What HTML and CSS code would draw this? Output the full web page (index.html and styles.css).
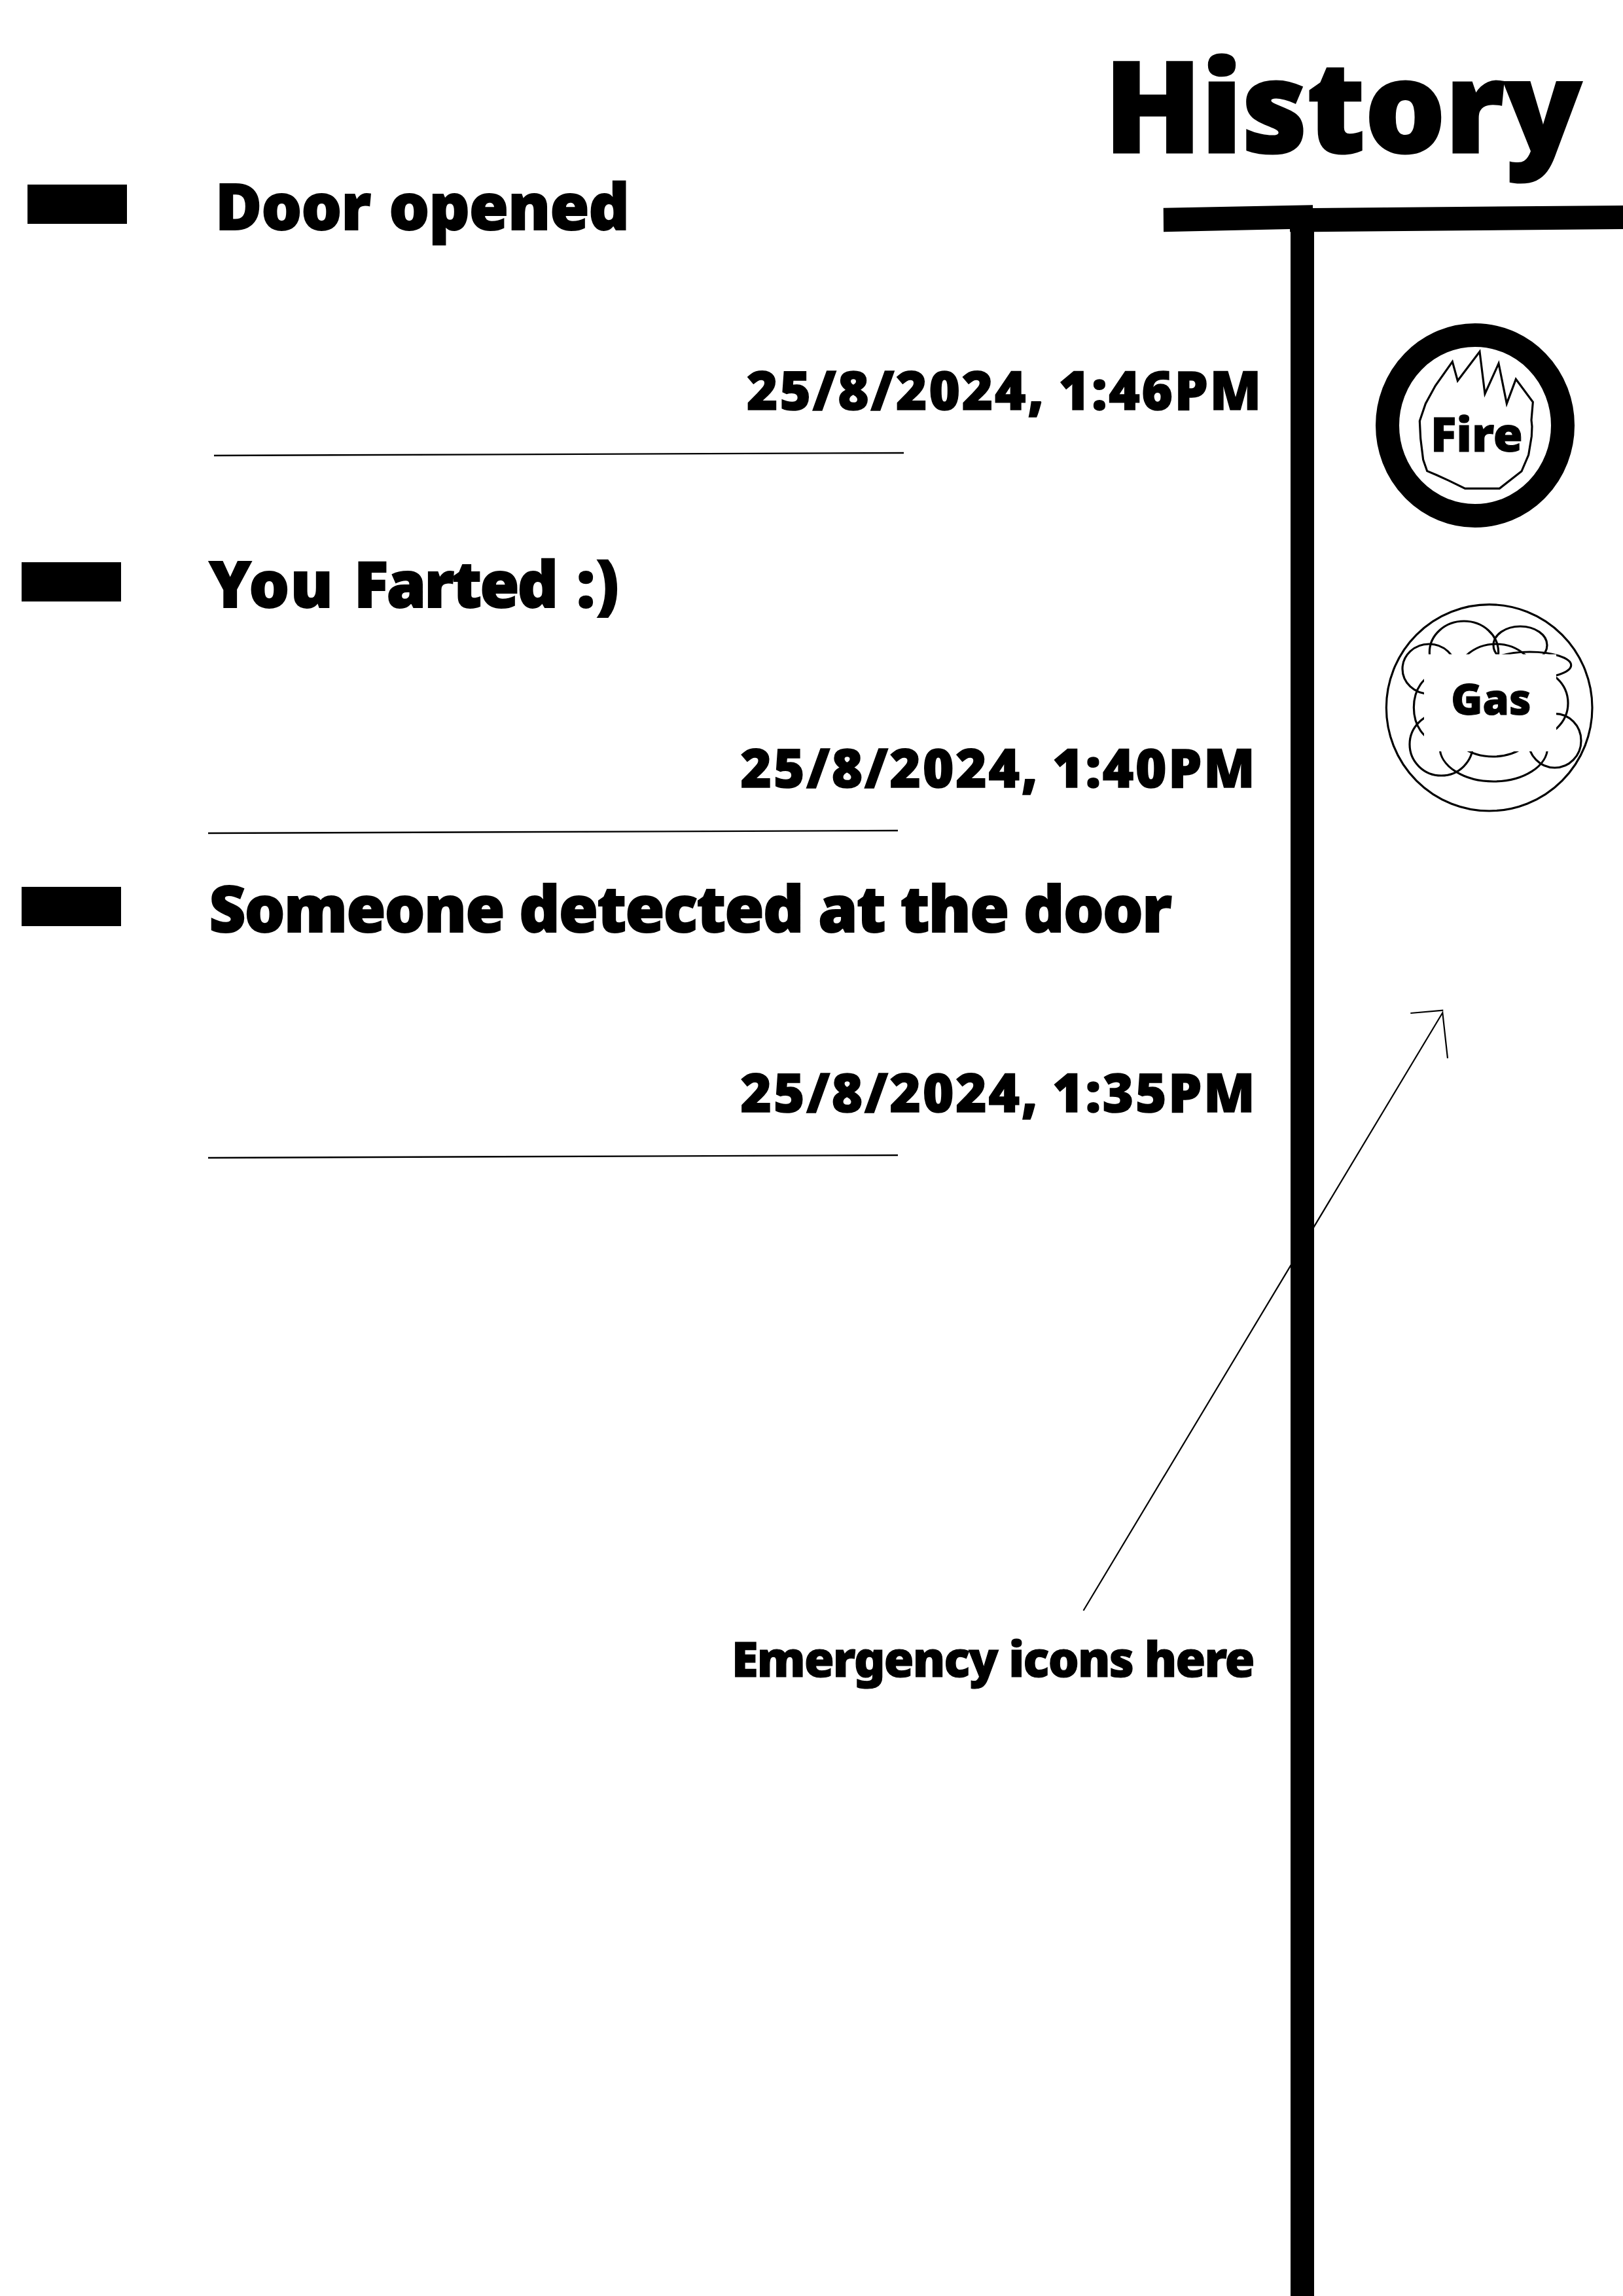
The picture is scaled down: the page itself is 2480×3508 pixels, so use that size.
FILE: index.html
```
<!DOCTYPE html>
<html lang="en">
<head>
<meta charset="utf-8">
<title>History</title>
<link rel="stylesheet" href="styles.css">
</head>
<body>
<header class="header"><h1 class="title">History</h1></header>
<div class="content">
  <main class="log">
    <article class="entry entry-first">
      <div class="marker"></div>
      <h2 class="event event-door">Door opened</h2>
      <time class="stamp">25/8/2024, 1:46PM</time>
      <svg class="rule" viewBox="0 0 1054 10"><line x1="0" y1="6" x2="1054" y2="2"/></svg>
    </article>
    <article class="entry">
      <div class="marker"></div>
      <h2 class="event event-gas">You <span class="tight">Farted</span> :)</h2>
      <time class="stamp">25/8/2024, 1:40PM</time>
      <svg class="rule" viewBox="0 0 1054 10"><line x1="0" y1="6" x2="1054" y2="2"/></svg>
    </article>
    <article class="entry">
      <div class="marker"></div>
      <h2 class="event event-person">Someone detected at the door</h2>
      <time class="stamp">25/8/2024, 1:35PM</time>
      <svg class="rule" viewBox="0 0 1054 10"><line x1="0" y1="6" x2="1054" y2="2"/></svg>
    </article>
    <p class="note">Emergency icons here</p>
  </main>
  <aside class="rail">
    <svg class="alert alert-fire" viewBox="0 0 1080 1080">
      <ellipse class="ring" cx="522" cy="540" rx="402" ry="414"/>
      <polygon class="thin" points="418,248 442,335 543,202 567,395 630,256 667,440 709,328 787,433 780,516 783,545 781,590 767,675 735,750 634,829 476,829 402,793 347,768 302,749 284,697 272,600 268,520 295,440 340,358"/>
      <text class="alert-text" x="318" y="661" font-size="219">Fire</text>
    </svg>
    <svg class="alert alert-gas" viewBox="0 0 1110 1080">
      <g class="thin">
        <ellipse cx="557" cy="544" rx="472" ry="473"/>
        <ellipse cx="441" cy="290" rx="158" ry="143"/>
        <ellipse cx="699" cy="257" rx="123" ry="86"/>
        <ellipse cx="281" cy="366" rx="122" ry="114"/>
        <ellipse cx="588" cy="425" rx="190" ry="173"/>
        <ellipse cx="316" cy="543" rx="105" ry="150"/>
        <ellipse cx="748" cy="523" rx="170" ry="160"/>
        <ellipse cx="574" cy="620" rx="200" ry="148"/>
        <ellipse cx="337" cy="712" rx="145" ry="143"/>
        <ellipse cx="577" cy="725" rx="247" ry="157"/>
        <ellipse cx="857" cy="695" rx="121" ry="124"/>
        <ellipse cx="742" cy="349" rx="190" ry="61"/>
      </g>
      <rect class="plate" x="258" y="299" width="606" height="445"/>
      <text class="alert-text" x="382" y="577" font-size="195">Gas</text>
    </svg>
  </aside>
</div>
<svg class="crossbar" viewBox="0 0 703 44">
  <path d="M0.7 4.8 229 0.3V4.9L703 1V37L230 41.3H194V37L1 41.3Z"/>
</svg>
<svg class="pointer" viewBox="0 0 570 930">
  <path d="M5.5 920.7 554.3 7.3 562 76.8M505.3 8 555.3 3.7"/>
</svg>
</body>
</html>
```
FILE: styles.css
```
body {
  position: relative;
  width: 2480px;
  height: 3508px;
  margin: 0;
  overflow: hidden;
  background: #fff;
  color: #000;
  font-family: "Noto Sans", "Open Sans", sans-serif;
  font-weight: 900;
}

h1, h2, p { margin: 0; font-weight: 900; }
svg { display: block; overflow: visible; }

.header {
  box-sizing: border-box;
  height: 282px;
  padding: 33px 64px 0 0;
  text-align: right;
}
.title {
  font-size: 194px;
  line-height: 250px;
  letter-spacing: -0.8px;
  -webkit-text-stroke: 3px #000;
}

.content { display: flex; height: 3226px; }
.log { width: 1971.5px; }

.entry {
  display: grid;
  grid-template-columns: 152px 1fr;
  grid-template-rows: 60px 303px auto;
  column-gap: 134px;
  width: 1888px;
  height: 496px;
  margin-left: 32.5px;
}
.entry-first { height: 577px; margin-left: 42px; }
.marker { background: #000; }
.event {
  padding-top: 1px;
  font-size: 97px;
  line-height: 60px;
  white-space: nowrap;
  -webkit-text-stroke: 2px #000;
}
.event-door { margin-left: 1px; letter-spacing: -0.8px; word-spacing: 4px; }
.event-gas { margin-left: 1px; letter-spacing: 1.5px; word-spacing: 4px; }
.tight { letter-spacing: -2.6px; }
.event-person { margin-left: 1px; letter-spacing: -1.6px; }
.stamp {
  grid-column: 2;
  margin-top: 203px;
  font-size: 81px;
  line-height: 100px;
  letter-spacing: 2.8px;
  word-spacing: -4px;
  text-align: right;
  -webkit-text-stroke: 1.6px #000;
}
.rule {
  grid-column: 2;
  width: 1054px;
  height: 10px;
  margin: 45px 0 0 -1px;
  stroke: #000;
  stroke-width: 2.4;
}

.note {
  width: 1915.8px;
  margin-top: 633px;
  font-size: 74px;
  line-height: 100px;
  letter-spacing: -1.8px;
  text-align: right;
  -webkit-text-stroke: 1.2px #000;
}

.rail {
  flex: 1;
  margin-top: 48px;
  border-left: 36px solid #000;
}
.alert-fire { width: 360px; height: 360px; margin: 140px 0 0 72.5px; }
.alert-gas { width: 370px; height: 360px; margin: 70px 0 0 82.5px; }
.ring { fill: none; stroke: #000; stroke-width: 108; }
.thin { fill: none; stroke: #000; stroke-width: 9.5; }
.plate { fill: #fff; }
.alert-text { fill: #000; stroke: #000; stroke-width: 3; }

.crossbar { position: absolute; left: 1777px; top: 313px; width: 703px; height: 44px; }
.pointer {
  position: absolute;
  left: 1650px;
  top: 1540px;
  width: 570px;
  height: 930px;
  fill: none;
  stroke: #000;
  stroke-width: 2.2;
}
```
